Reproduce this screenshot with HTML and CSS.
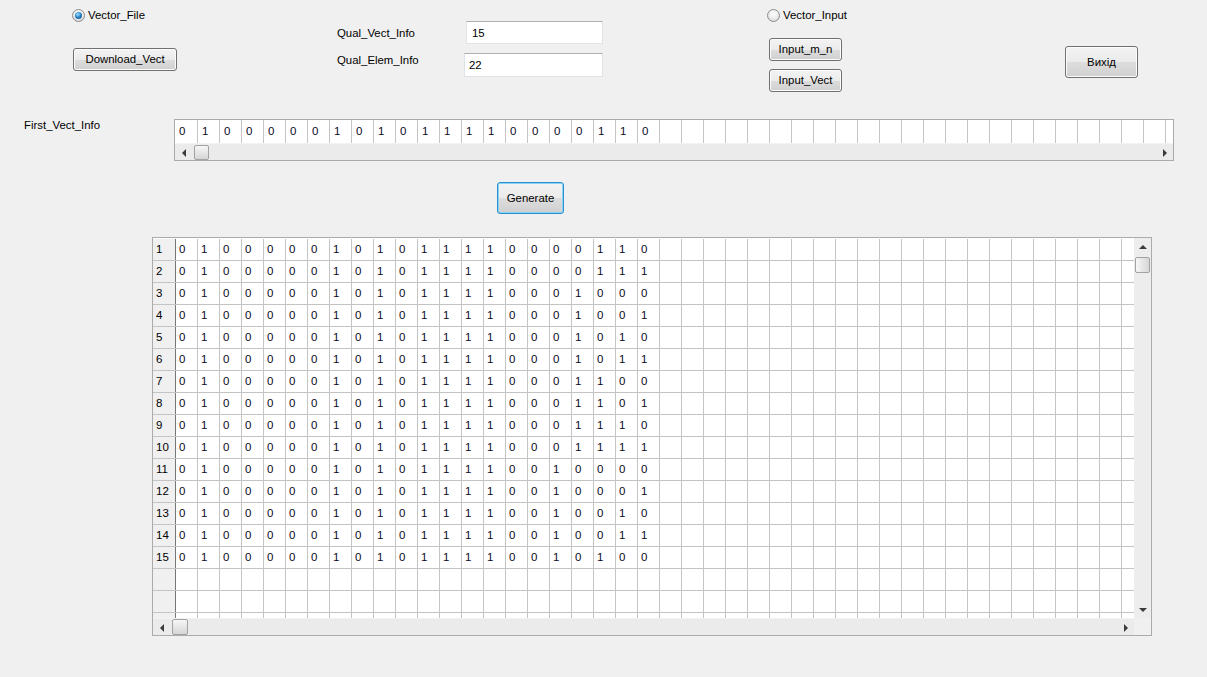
FILE: index.html
```html
<!DOCTYPE html>
<html lang="uk">
<head>
<meta charset="utf-8">
<title>Vector</title>
<link rel="stylesheet" href="styles.css">
</head>
<body>
<div class="form">
  <div class="top">
    <div class="grp-file">
      <div class="radio"><span class="rdot on"></span><span>Vector_File</span></div>
      <button class="btn btn-dl">Download_Vect</button>
    </div>
    <div class="grp-qual">
      <div class="qual-labels">
        <span>Qual_Vect_Info</span>
        <span>Qual_Elem_Info</span>
      </div>
      <div class="qual-inputs">
        <input class="tb tb1" value="15" readonly>
        <input class="tb tb2" value="22" readonly>
      </div>
    </div>
    <div class="grp-input">
      <div class="radio"><span class="rdot"></span><span>Vector_Input</span></div>
      <button class="btn btn-mn">Input_m_n</button>
      <button class="btn btn-iv">Input_Vect</button>
    </div>
    <div class="grp-exit">
      <button class="btn btn-exit">Вихід</button>
    </div>
  </div>

  <div class="first">
    <div class="first-label">First_Vect_Info</div>
    <div class="vgrid">
      <div class="vrow">
        <span class="c c0">0</span><span class="c">1</span><span class="c">0</span><span class="c">0</span><span class="c">0</span><span class="c">0</span><span class="c">0</span><span class="c">1</span><span class="c">0</span><span class="c">1</span><span class="c">0</span><span class="c">1</span><span class="c">1</span><span class="c">1</span><span class="c">1</span><span class="c">0</span><span class="c">0</span><span class="c">0</span><span class="c">0</span><span class="c">1</span><span class="c">1</span><span class="c">0</span><span class="fill"></span>
      </div>
      <div class="hsb hsb-small">
        <span class="sbtn"><i class="ar-l"></i></span>
        <span class="track"><span class="thumb-h thumb-small"></span></span>
        <span class="sbtn"><i class="ar-r"></i></span>
      </div>
    </div>
  </div>

  <div class="gen-row">
    <button class="btn btn-gen">Generate</button>
  </div>

  <div class="main-row">
    <div class="mgrid">
      <div class="cells">
        <div class="row"><span class="rh">1</span><span class="c">0</span><span class="c">1</span><span class="c">0</span><span class="c">0</span><span class="c">0</span><span class="c">0</span><span class="c">0</span><span class="c">1</span><span class="c">0</span><span class="c">1</span><span class="c">0</span><span class="c">1</span><span class="c">1</span><span class="c">1</span><span class="c">1</span><span class="c">0</span><span class="c">0</span><span class="c">0</span><span class="c">0</span><span class="c">1</span><span class="c">1</span><span class="c">0</span><span class="fill"></span></div>
        <div class="row"><span class="rh">2</span><span class="c">0</span><span class="c">1</span><span class="c">0</span><span class="c">0</span><span class="c">0</span><span class="c">0</span><span class="c">0</span><span class="c">1</span><span class="c">0</span><span class="c">1</span><span class="c">0</span><span class="c">1</span><span class="c">1</span><span class="c">1</span><span class="c">1</span><span class="c">0</span><span class="c">0</span><span class="c">0</span><span class="c">0</span><span class="c">1</span><span class="c">1</span><span class="c">1</span><span class="fill"></span></div>
        <div class="row"><span class="rh">3</span><span class="c">0</span><span class="c">1</span><span class="c">0</span><span class="c">0</span><span class="c">0</span><span class="c">0</span><span class="c">0</span><span class="c">1</span><span class="c">0</span><span class="c">1</span><span class="c">0</span><span class="c">1</span><span class="c">1</span><span class="c">1</span><span class="c">1</span><span class="c">0</span><span class="c">0</span><span class="c">0</span><span class="c">1</span><span class="c">0</span><span class="c">0</span><span class="c">0</span><span class="fill"></span></div>
        <div class="row"><span class="rh">4</span><span class="c">0</span><span class="c">1</span><span class="c">0</span><span class="c">0</span><span class="c">0</span><span class="c">0</span><span class="c">0</span><span class="c">1</span><span class="c">0</span><span class="c">1</span><span class="c">0</span><span class="c">1</span><span class="c">1</span><span class="c">1</span><span class="c">1</span><span class="c">0</span><span class="c">0</span><span class="c">0</span><span class="c">1</span><span class="c">0</span><span class="c">0</span><span class="c">1</span><span class="fill"></span></div>
        <div class="row"><span class="rh">5</span><span class="c">0</span><span class="c">1</span><span class="c">0</span><span class="c">0</span><span class="c">0</span><span class="c">0</span><span class="c">0</span><span class="c">1</span><span class="c">0</span><span class="c">1</span><span class="c">0</span><span class="c">1</span><span class="c">1</span><span class="c">1</span><span class="c">1</span><span class="c">0</span><span class="c">0</span><span class="c">0</span><span class="c">1</span><span class="c">0</span><span class="c">1</span><span class="c">0</span><span class="fill"></span></div>
        <div class="row"><span class="rh">6</span><span class="c">0</span><span class="c">1</span><span class="c">0</span><span class="c">0</span><span class="c">0</span><span class="c">0</span><span class="c">0</span><span class="c">1</span><span class="c">0</span><span class="c">1</span><span class="c">0</span><span class="c">1</span><span class="c">1</span><span class="c">1</span><span class="c">1</span><span class="c">0</span><span class="c">0</span><span class="c">0</span><span class="c">1</span><span class="c">0</span><span class="c">1</span><span class="c">1</span><span class="fill"></span></div>
        <div class="row"><span class="rh">7</span><span class="c">0</span><span class="c">1</span><span class="c">0</span><span class="c">0</span><span class="c">0</span><span class="c">0</span><span class="c">0</span><span class="c">1</span><span class="c">0</span><span class="c">1</span><span class="c">0</span><span class="c">1</span><span class="c">1</span><span class="c">1</span><span class="c">1</span><span class="c">0</span><span class="c">0</span><span class="c">0</span><span class="c">1</span><span class="c">1</span><span class="c">0</span><span class="c">0</span><span class="fill"></span></div>
        <div class="row"><span class="rh">8</span><span class="c">0</span><span class="c">1</span><span class="c">0</span><span class="c">0</span><span class="c">0</span><span class="c">0</span><span class="c">0</span><span class="c">1</span><span class="c">0</span><span class="c">1</span><span class="c">0</span><span class="c">1</span><span class="c">1</span><span class="c">1</span><span class="c">1</span><span class="c">0</span><span class="c">0</span><span class="c">0</span><span class="c">1</span><span class="c">1</span><span class="c">0</span><span class="c">1</span><span class="fill"></span></div>
        <div class="row"><span class="rh">9</span><span class="c">0</span><span class="c">1</span><span class="c">0</span><span class="c">0</span><span class="c">0</span><span class="c">0</span><span class="c">0</span><span class="c">1</span><span class="c">0</span><span class="c">1</span><span class="c">0</span><span class="c">1</span><span class="c">1</span><span class="c">1</span><span class="c">1</span><span class="c">0</span><span class="c">0</span><span class="c">0</span><span class="c">1</span><span class="c">1</span><span class="c">1</span><span class="c">0</span><span class="fill"></span></div>
        <div class="row"><span class="rh">10</span><span class="c">0</span><span class="c">1</span><span class="c">0</span><span class="c">0</span><span class="c">0</span><span class="c">0</span><span class="c">0</span><span class="c">1</span><span class="c">0</span><span class="c">1</span><span class="c">0</span><span class="c">1</span><span class="c">1</span><span class="c">1</span><span class="c">1</span><span class="c">0</span><span class="c">0</span><span class="c">0</span><span class="c">1</span><span class="c">1</span><span class="c">1</span><span class="c">1</span><span class="fill"></span></div>
        <div class="row"><span class="rh">11</span><span class="c">0</span><span class="c">1</span><span class="c">0</span><span class="c">0</span><span class="c">0</span><span class="c">0</span><span class="c">0</span><span class="c">1</span><span class="c">0</span><span class="c">1</span><span class="c">0</span><span class="c">1</span><span class="c">1</span><span class="c">1</span><span class="c">1</span><span class="c">0</span><span class="c">0</span><span class="c">1</span><span class="c">0</span><span class="c">0</span><span class="c">0</span><span class="c">0</span><span class="fill"></span></div>
        <div class="row"><span class="rh">12</span><span class="c">0</span><span class="c">1</span><span class="c">0</span><span class="c">0</span><span class="c">0</span><span class="c">0</span><span class="c">0</span><span class="c">1</span><span class="c">0</span><span class="c">1</span><span class="c">0</span><span class="c">1</span><span class="c">1</span><span class="c">1</span><span class="c">1</span><span class="c">0</span><span class="c">0</span><span class="c">1</span><span class="c">0</span><span class="c">0</span><span class="c">0</span><span class="c">1</span><span class="fill"></span></div>
        <div class="row"><span class="rh">13</span><span class="c">0</span><span class="c">1</span><span class="c">0</span><span class="c">0</span><span class="c">0</span><span class="c">0</span><span class="c">0</span><span class="c">1</span><span class="c">0</span><span class="c">1</span><span class="c">0</span><span class="c">1</span><span class="c">1</span><span class="c">1</span><span class="c">1</span><span class="c">0</span><span class="c">0</span><span class="c">1</span><span class="c">0</span><span class="c">0</span><span class="c">1</span><span class="c">0</span><span class="fill"></span></div>
        <div class="row"><span class="rh">14</span><span class="c">0</span><span class="c">1</span><span class="c">0</span><span class="c">0</span><span class="c">0</span><span class="c">0</span><span class="c">0</span><span class="c">1</span><span class="c">0</span><span class="c">1</span><span class="c">0</span><span class="c">1</span><span class="c">1</span><span class="c">1</span><span class="c">1</span><span class="c">0</span><span class="c">0</span><span class="c">1</span><span class="c">0</span><span class="c">0</span><span class="c">1</span><span class="c">1</span><span class="fill"></span></div>
        <div class="row"><span class="rh">15</span><span class="c">0</span><span class="c">1</span><span class="c">0</span><span class="c">0</span><span class="c">0</span><span class="c">0</span><span class="c">0</span><span class="c">1</span><span class="c">0</span><span class="c">1</span><span class="c">0</span><span class="c">1</span><span class="c">1</span><span class="c">1</span><span class="c">1</span><span class="c">0</span><span class="c">0</span><span class="c">1</span><span class="c">0</span><span class="c">1</span><span class="c">0</span><span class="c">0</span><span class="fill"></span></div>
        <div class="row"><span class="rh"></span><span class="fill"></span></div>
        <div class="row"><span class="rh"></span><span class="fill"></span></div>
        <div class="row"><span class="rh"></span><span class="fill"></span></div>
      </div>
      <div class="vsb">
        <span class="sbtn"><i class="ar-u"></i></span>
        <span class="vtrack"><span class="thumb-v"></span></span>
        <span class="sbtn"><i class="ar-d"></i></span>
      </div>
      <div class="hsb">
        <span class="sbtn"><i class="ar-l"></i></span>
        <span class="track"><span class="thumb-h"></span></span>
        <span class="sbtn"><i class="ar-r"></i></span>
      </div>
      <div class="corner"></div>
    </div>
  </div>
</div>
</body>
</html>
```

FILE: styles.css
```css
* { box-sizing: border-box; margin: 0; padding: 0; }
html, body { width: 1207px; height: 677px; overflow: hidden; }
body {
  background: #f0f0f0;
  font-family: "Liberation Sans", Arial, sans-serif;
  font-size: 11.4px;
  line-height: 13px;
  color: #000;
}

/* ---------- top controls ---------- */
.top { display: flex; align-items: flex-start; height: 119px; }

.grp-file { margin-left: 72px; width: 265px; display: flex; flex-direction: column; align-items: flex-start; }
.grp-qual { width: 430px; display: flex; align-items: flex-start; }
.grp-input { width: 298px; display: flex; flex-direction: column; align-items: flex-start; }
.grp-exit { padding-top: 46px; }

.radio { display: flex; align-items: center; gap: 3px; height: 13px; margin-top: 9px; }
.rdot {
  width: 13px; height: 13px; border-radius: 50%;
  border: 1px solid #8c8c8c;
  background: radial-gradient(circle at 50% 35%, #ffffff 0, #eaeaea 55%, #cdcdcd 100%);
  display: flex; align-items: center; justify-content: center;
}
.rdot.on::after {
  content: ""; width: 7px; height: 7px; border-radius: 50%;
  background: radial-gradient(circle at 40% 35%, #a6e0ff 0, #2b88c8 45%, #0d3a66 100%);
}

.btn {
  display: flex; align-items: center; justify-content: center;
  border: 1px solid #707070; border-radius: 3px;
  background: linear-gradient(#f3f3f3 0%, #ebebeb 50%, #dddddd 51%, #d0d0d0 100%);
  box-shadow: inset 0 0 0 1px #fcfcfc;
  font: inherit; color: #000; padding: 0;
}
.btn-dl { width: 104px; height: 23px; margin-top: 26px; margin-left: 1px; }
.btn-mn { width: 73px; height: 23px; margin-top: 16px; margin-left: 2px; }
.btn-iv { width: 73px; height: 23px; margin-top: 8px; margin-left: 2px; }
.btn-exit { width: 73px; height: 32px; }
.btn-gen {
  width: 67px; height: 32px;
  border-color: #2e8fd0;
  box-shadow: inset 0 0 0 1px #86d3f6;
}

.qual-labels { width: 127px; padding-top: 27px; display: flex; flex-direction: column; gap: 14px; }
.qual-inputs { width: 139px; padding-top: 21px; display: flex; flex-direction: column; align-items: flex-end; gap: 9px; }
.tb {
  display: block; background: #fff;
  border: 1px solid #dfe3e8; border-top-color: #adafb5;
  font: inherit; color: #000; outline: none;
}
.tb1 { width: 137px; height: 23px; padding-left: 5px; }
.tb2 { width: 139px; height: 24px; padding-left: 4px; }

/* ---------- first vector ---------- */
.first { display: flex; height: 42px; }
.first-label { width: 174px; padding-left: 24px; }
.vgrid {
  width: 1000px; height: 42px; border: 1px solid #ababab; background: #fff;
  display: flex; flex-direction: column;
}
.vrow { display: flex; height: 23px; flex: none; }
.vrow .c { line-height: 23px; padding-left: 4px; }
.vrow .c0 { width: 23px; }

/* ---------- cells ---------- */
.c {
  flex: none; width: 22px;
  border-right: 1px solid #c4c4c4;
  padding-left: 3px;
  font-size: 11.5px; line-height: 21px; color: #0a0a1e;
}
.fill {
  flex: 1;
  background: repeating-linear-gradient(90deg, transparent 0 21px, #c4c4c4 21px 22px);
}

/* ---------- generate ---------- */
.gen-row { padding-left: 497px; padding-top: 21px; height: 76px; }

/* ---------- main grid ---------- */
.main-row { padding-left: 152px; }
.mgrid {
  width: 1000px; height: 399px; border: 1px solid #ababab; background: #fff;
  display: grid; grid-template-columns: 981px 17px; grid-template-rows: 380px 17px;
}
.cells { overflow: hidden; padding-top: 1px; }
.row { display: flex; height: 22px; border-bottom: 1px solid #c4c4c4; }
.rh {
  flex: none; width: 23px; background: #f0f0f0;
  border-right: 1px solid #777;
  padding-left: 3px; font-size: 11.5px; line-height: 21px;
}

/* ---------- scrollbars ---------- */
.hsb { display: flex; height: 17px; background: #ebebeb; border-top: 1px solid #f3f3f3; }
.hsb-small { height: 17px; flex: none; }
.track { flex: 1; display: flex; align-items: center; }
.sbtn { flex: none; width: 17px; height: 17px; display: flex; align-items: center; justify-content: center; }
.vsb { display: flex; flex-direction: column; background: #ededed; grid-row: 1; grid-column: 2; }
.vtrack { flex: 1; display: flex; flex-direction: column; align-items: center; }
.corner { background: #f0f0f0; }

.thumb-h {
  width: 16px; height: 16px; margin-left: 2px;
  border: 1px solid #a2a2a2; border-radius: 2px;
  background: linear-gradient(#f7f7f7, #e6e6e6 50%, #d6d6d6);
}
.thumb-small { width: 15px; height: 15px; }
.thumb-v {
  width: 15px; height: 16px; margin-top: 2px;
  border: 1px solid #a2a2a2; border-radius: 2px;
  background: linear-gradient(90deg, #f7f7f7, #e6e6e6 50%, #d6d6d6);
}

.ar-l, .ar-r, .ar-u, .ar-d { display: block; width: 0; height: 0; }
.ar-l { border-top: 4px solid transparent; border-bottom: 4px solid transparent; border-right: 4px solid #3a3a3a; }
.ar-r { border-top: 4px solid transparent; border-bottom: 4px solid transparent; border-left: 4px solid #3a3a3a; }
.ar-u { border-left: 4px solid transparent; border-right: 4px solid transparent; border-bottom: 4px solid #3a3a3a; }
.ar-d { border-left: 4px solid transparent; border-right: 4px solid transparent; border-top: 4px solid #3a3a3a; }
```
